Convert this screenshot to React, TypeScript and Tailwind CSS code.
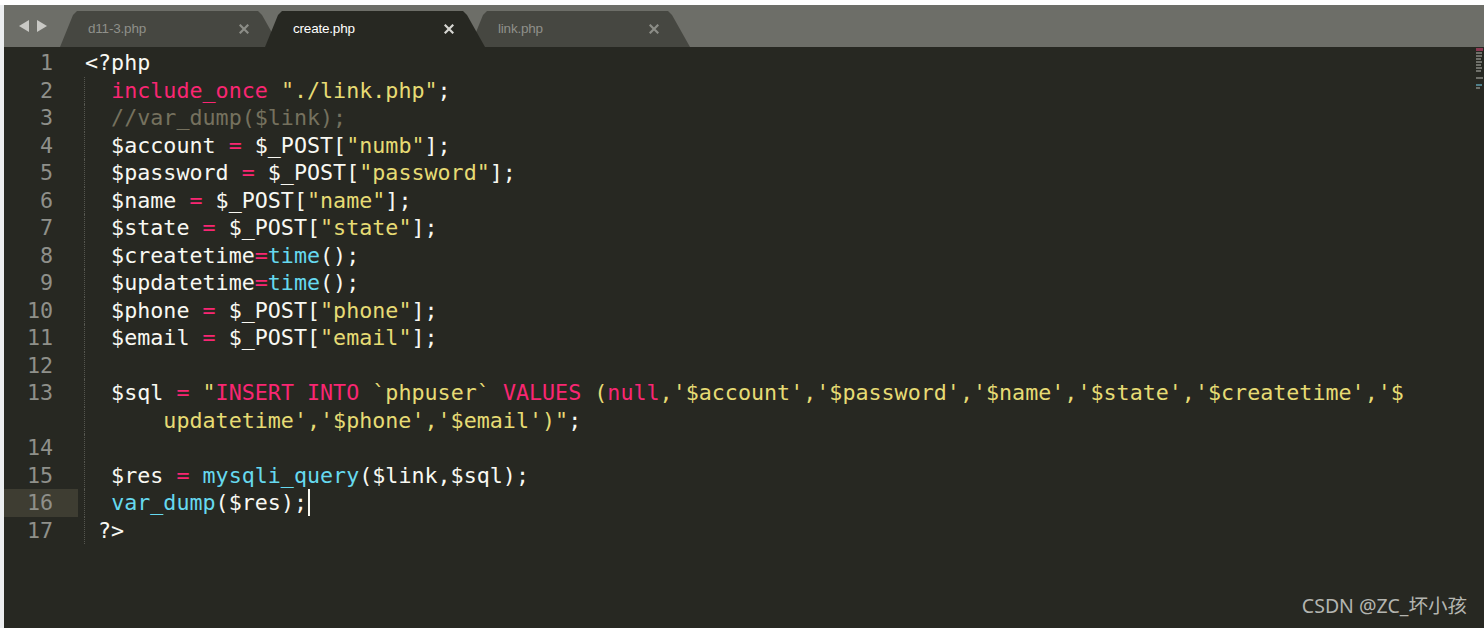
import React from 'react';

type Tok = [string, string];

const W = 'text-[#f8f8f2]';
const P = 'text-[#f92672]';
const Y = 'text-[#e6db74]';
const B = 'text-[#66d9ef]';
const C = 'text-[#75715e]';

// one entry per visual row; num null = wrapped continuation
const LINES: { num: number | null; toks: Tok[]; guide?: boolean; active?: boolean }[] = [
  { num: 1, toks: [['<?php', W]] },
  { num: 2, guide: true, toks: [['  ', W], ['include_once', P], [' ', W], ['"./link.php"', Y], [';', W]] },
  { num: 3, guide: true, toks: [['  //var_dump($link);', C]] },
  { num: 4, guide: true, toks: [['  $account ', W], ['=', P], [' $_POST[', W], ['"numb"', Y], ['];', W]] },
  { num: 5, guide: true, toks: [['  $password ', W], ['=', P], [' $_POST[', W], ['"password"', Y], ['];', W]] },
  { num: 6, guide: true, toks: [['  $name ', W], ['=', P], [' $_POST[', W], ['"name"', Y], ['];', W]] },
  { num: 7, guide: true, toks: [['  $state ', W], ['=', P], [' $_POST[', W], ['"state"', Y], ['];', W]] },
  { num: 8, guide: true, toks: [['  $createtime', W], ['=', P], ['time', B], ['();', W]] },
  { num: 9, guide: true, toks: [['  $updatetime', W], ['=', P], ['time', B], ['();', W]] },
  { num: 10, guide: true, toks: [['  $phone ', W], ['=', P], [' $_POST[', W], ['"phone"', Y], ['];', W]] },
  { num: 11, guide: true, toks: [['  $email ', W], ['=', P], [' $_POST[', W], ['"email"', Y], ['];', W]] },
  { num: 12, guide: true, toks: [] },
  {
    num: 13,
    guide: true,
    toks: [
      ['  $sql ', W], ['=', P], [' "', Y], ['INSERT INTO', P], [' `phpuser` ', Y], ['VALUES', P], [' (', Y], ['null', P],
      [",'$account','$password','$name','$state','$createtime','$", Y],
    ],
  },
  { num: null, guide: true, toks: [['      ', W], ["updatetime','$phone','$email')\"", Y], [';', W]] },
  { num: 14, guide: true, toks: [] },
  { num: 15, guide: true, toks: [['  $res ', W], ['=', P], [' ', W], ['mysqli_query', B], ['($link,$sql);', W]] },
  { num: 16, guide: true, active: true, toks: [['  ', W], ['var_dump', B], ['($res);', W]] },
  { num: 17, guide: true, toks: [[' ?>', W]] },
];

const TABS = [
  { name: 'd11-3.php', active: false },
  { name: 'create.php', active: true },
  { name: 'link.php', active: false },
];

const Close = ({ active }: { active: boolean }) => (
  <svg width="10" height="10" viewBox="0 0 10 10" className="shrink-0">
    <path d="M1.5 1.5 L8.5 8.5 M8.5 1.5 L1.5 8.5" stroke={active ? '#d6d6d2' : '#8c8d87'} strokeWidth="2.2" strokeLinecap="square" />
  </svg>
);

const Minimap = () => (
  <div className="w-[8px] shrink-0 flex flex-col gap-[1px] pt-[1px]">
    <div className="h-[3px] w-[7px] bg-[#8a3a52]" />
    <div className="h-[2px] w-[6px] bg-[#6f706a]" />
    <div className="h-[2px] w-[6px] bg-[#6f706a]" />
    <div className="h-[2px] w-[5px] bg-[#6f706a]" />
    <div className="h-[2px] w-[6px] bg-[#6f706a]" />
    <div className="h-[2px] w-[5px] bg-[#6f706a]" />
    <div className="h-[2px] w-[6px] bg-[#6f706a]" />
    <div className="h-[2px] w-[5px] bg-[#6f706a]" />
    <div className="h-[3px]" />
    <div className="h-[2px] w-[7px] bg-[#6f706a]" />
    <div className="h-[3px]" />
    <div className="h-[2px] w-[6px] bg-[#4f7f8a]" />
    <div className="h-[2px] w-[4px] bg-[#6f706a]" />
  </div>
);

export default function App() {
  return (
    <div className="w-[1484px] h-[628px] overflow-hidden bg-white flex flex-col relative">
      <div className="h-[5px] shrink-0 bg-white" />
      <div className="flex flex-1 min-h-0">
        <div className="w-[4px] shrink-0 bg-[#eceef0]" />
        <div className="flex-1 flex flex-col min-w-0">
          {/* tab bar */}
          <div className="h-[42px] shrink-0 bg-[#6d6e68] flex items-end font-['Liberation_Sans',sans-serif] text-[13.5px]">
            <div className="w-[56px] h-full flex items-center justify-center gap-[6px] pl-[2px] pb-[1px]">
              <svg width="11" height="12" viewBox="0 0 11 12"><path d="M10 0 L0 6 L10 12 Z" fill="#c9c9c5" /></svg>
              <svg width="11" height="12" viewBox="0 0 11 12"><path d="M1 0 L11 6 L1 12 Z" fill="#c9c9c5" /></svg>
            </div>
            {TABS.map((t, i) => (
              <div
                key={t.name}
                className={`relative w-[220px] h-[36px] flex items-center pl-[28px] pr-[31px] justify-between [clip-path:polygon(0_100%,13px_4px,17px_0,calc(100%-22px)_0,calc(100%-18px)_4px,100%_100%)] ${
                  i > 0 ? '-ml-[15px]' : ''
                } ${t.active ? 'bg-[#272822] z-10 text-white' : 'bg-[#464741] text-[#8f908a]'}`}
              >
                <span className="tracking-[-0.2px]">{t.name}</span>
                <Close active={t.active} />
              </div>
            ))}
          </div>
          {/* editor */}
          <div className="flex-1 bg-[#272822] flex min-h-0">
            <div className="flex-1 pt-[2px] font-['DejaVu_Sans_Mono',monospace] text-[21.7px] leading-[27.5px]">
              {LINES.map((l, i) => (
                <div key={i} className="flex h-[27.5px]">
                  <div
                    className={`w-[74px] shrink-0 text-right pr-[25px] text-[#8f908a] ${l.active ? 'bg-[#3e3d32]' : ''}`}
                  >
                    {l.num ?? ''}
                  </div>
                  <div className="pl-[7px] flex-1">
                    <div
                      className={`h-full whitespace-pre ${l.guide ? 'border-l border-dotted border-[#55564f] -ml-px' : ''}`}
                    >
                      {l.toks.map((tk, j) => (
                        <span key={j} className={tk[1]}>
                          {tk[0]}
                        </span>
                      ))}
                      {l.active && (
                        <span className="inline-block w-[2px] h-[27px] bg-[#f8f8f0] align-[-6px] ml-[1px]" />
                      )}
                    </div>
                  </div>
                </div>
              ))}
            </div>
            <Minimap />
          </div>
        </div>
      </div>
      <div className="absolute right-[17px] bottom-[8px] text-[19.5px] text-[#b4b5b0] font-['Noto_Sans','Noto_Sans_CJK_SC',sans-serif]">
        CSDN @ZC_坏小孩
      </div>
    </div>
  );
}
